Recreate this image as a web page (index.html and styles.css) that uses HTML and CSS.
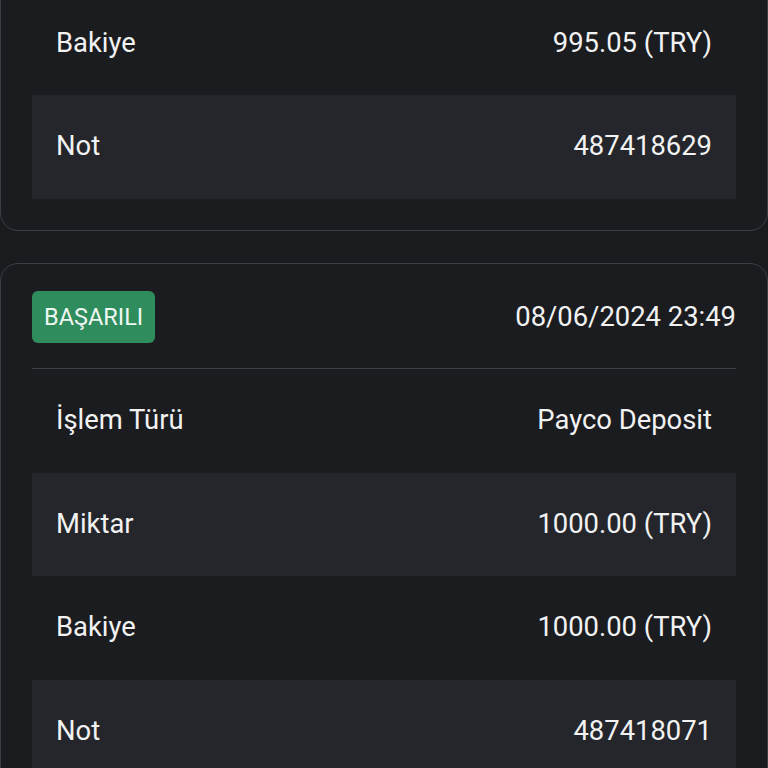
FILE: index.html
```html
<!DOCTYPE html>
<html lang="tr">
    <head>
        <meta charset="UTF-8">
        <meta name="viewport" content="width=device-width, initial-scale=1.0">
        <title>İşlem Geçmişi</title>
        <link rel="stylesheet" href="styles.css">
    </head>
    <body>
        <div class="history">
            <div class="tx-card">
                <div class="tx-header">
                    <span class="status success">BAŞARILI</span>
                    <span class="tx-date">08/06/2024 23:52</span>
                </div>
                <div class="tx-row"><span>İşlem Türü</span><span>Payco Withdraw</span></div>
                <div class="tx-row alt"><span>Miktar</span><span>4.95 (TRY)</span></div>
                <div class="tx-row"><span>Bakiye</span><span>995.05 (TRY)</span></div>
                <div class="tx-row alt"><span>Not</span><span>487418629</span></div>
            </div>

            <div class="tx-card">
                <div class="tx-header">
                    <span class="status success">BAŞARILI</span>
                    <span class="tx-date">08/06/2024 23:49</span>
                </div>
                <div class="tx-row"><span>İşlem Türü</span><span>Payco Deposit</span></div>
                <div class="tx-row alt"><span>Miktar</span><span>1000.00 (TRY)</span></div>
                <div class="tx-row"><span>Bakiye</span><span>1000.00 (TRY)</span></div>
                <div class="tx-row alt"><span>Not</span><span>487418071</span></div>
            </div>
        </div>
    </body>
</html>
```

FILE: styles.css
```css
* {
    margin: 0;
    padding: 0;
    box-sizing: border-box;
    font-family: Roboto, 'Liberation Sans', sans-serif;
}

body {
    background-color: #1a1b1f;
    color: #f2f2f2;
    overflow: hidden;
}

.history {
    /* list is scrolled: only the end of the first card is in view */
    margin-top: -322px;
    display: flex;
    flex-direction: column;
    gap: 32px;
}

.tx-card {
    border: 1.5px solid #3c3e43;
    border-radius: 18px;
    padding: 27px 31px 31px;
    background: #1b1c20;
}

.tx-header {
    display: flex;
    justify-content: space-between;
    align-items: center;
    padding-bottom: 25.5px;
    border-bottom: 1.5px solid #3d3f44;
}

.status {
    font-size: 23.5px;
    line-height: 28px;
    padding: 12px 12px;
    border-radius: 6px;
}

.status.success {
    background: #2f8c5d;
    color: #eef7f1;
}

.tx-date {
    font-size: 27.4px;
}

.tx-row {
    display: flex;
    justify-content: space-between;
    font-size: 27.4px;
    line-height: 35.5px;
    padding: 34px 24px;
}

.tx-row.alt {
    background: #24262b;
}
```
